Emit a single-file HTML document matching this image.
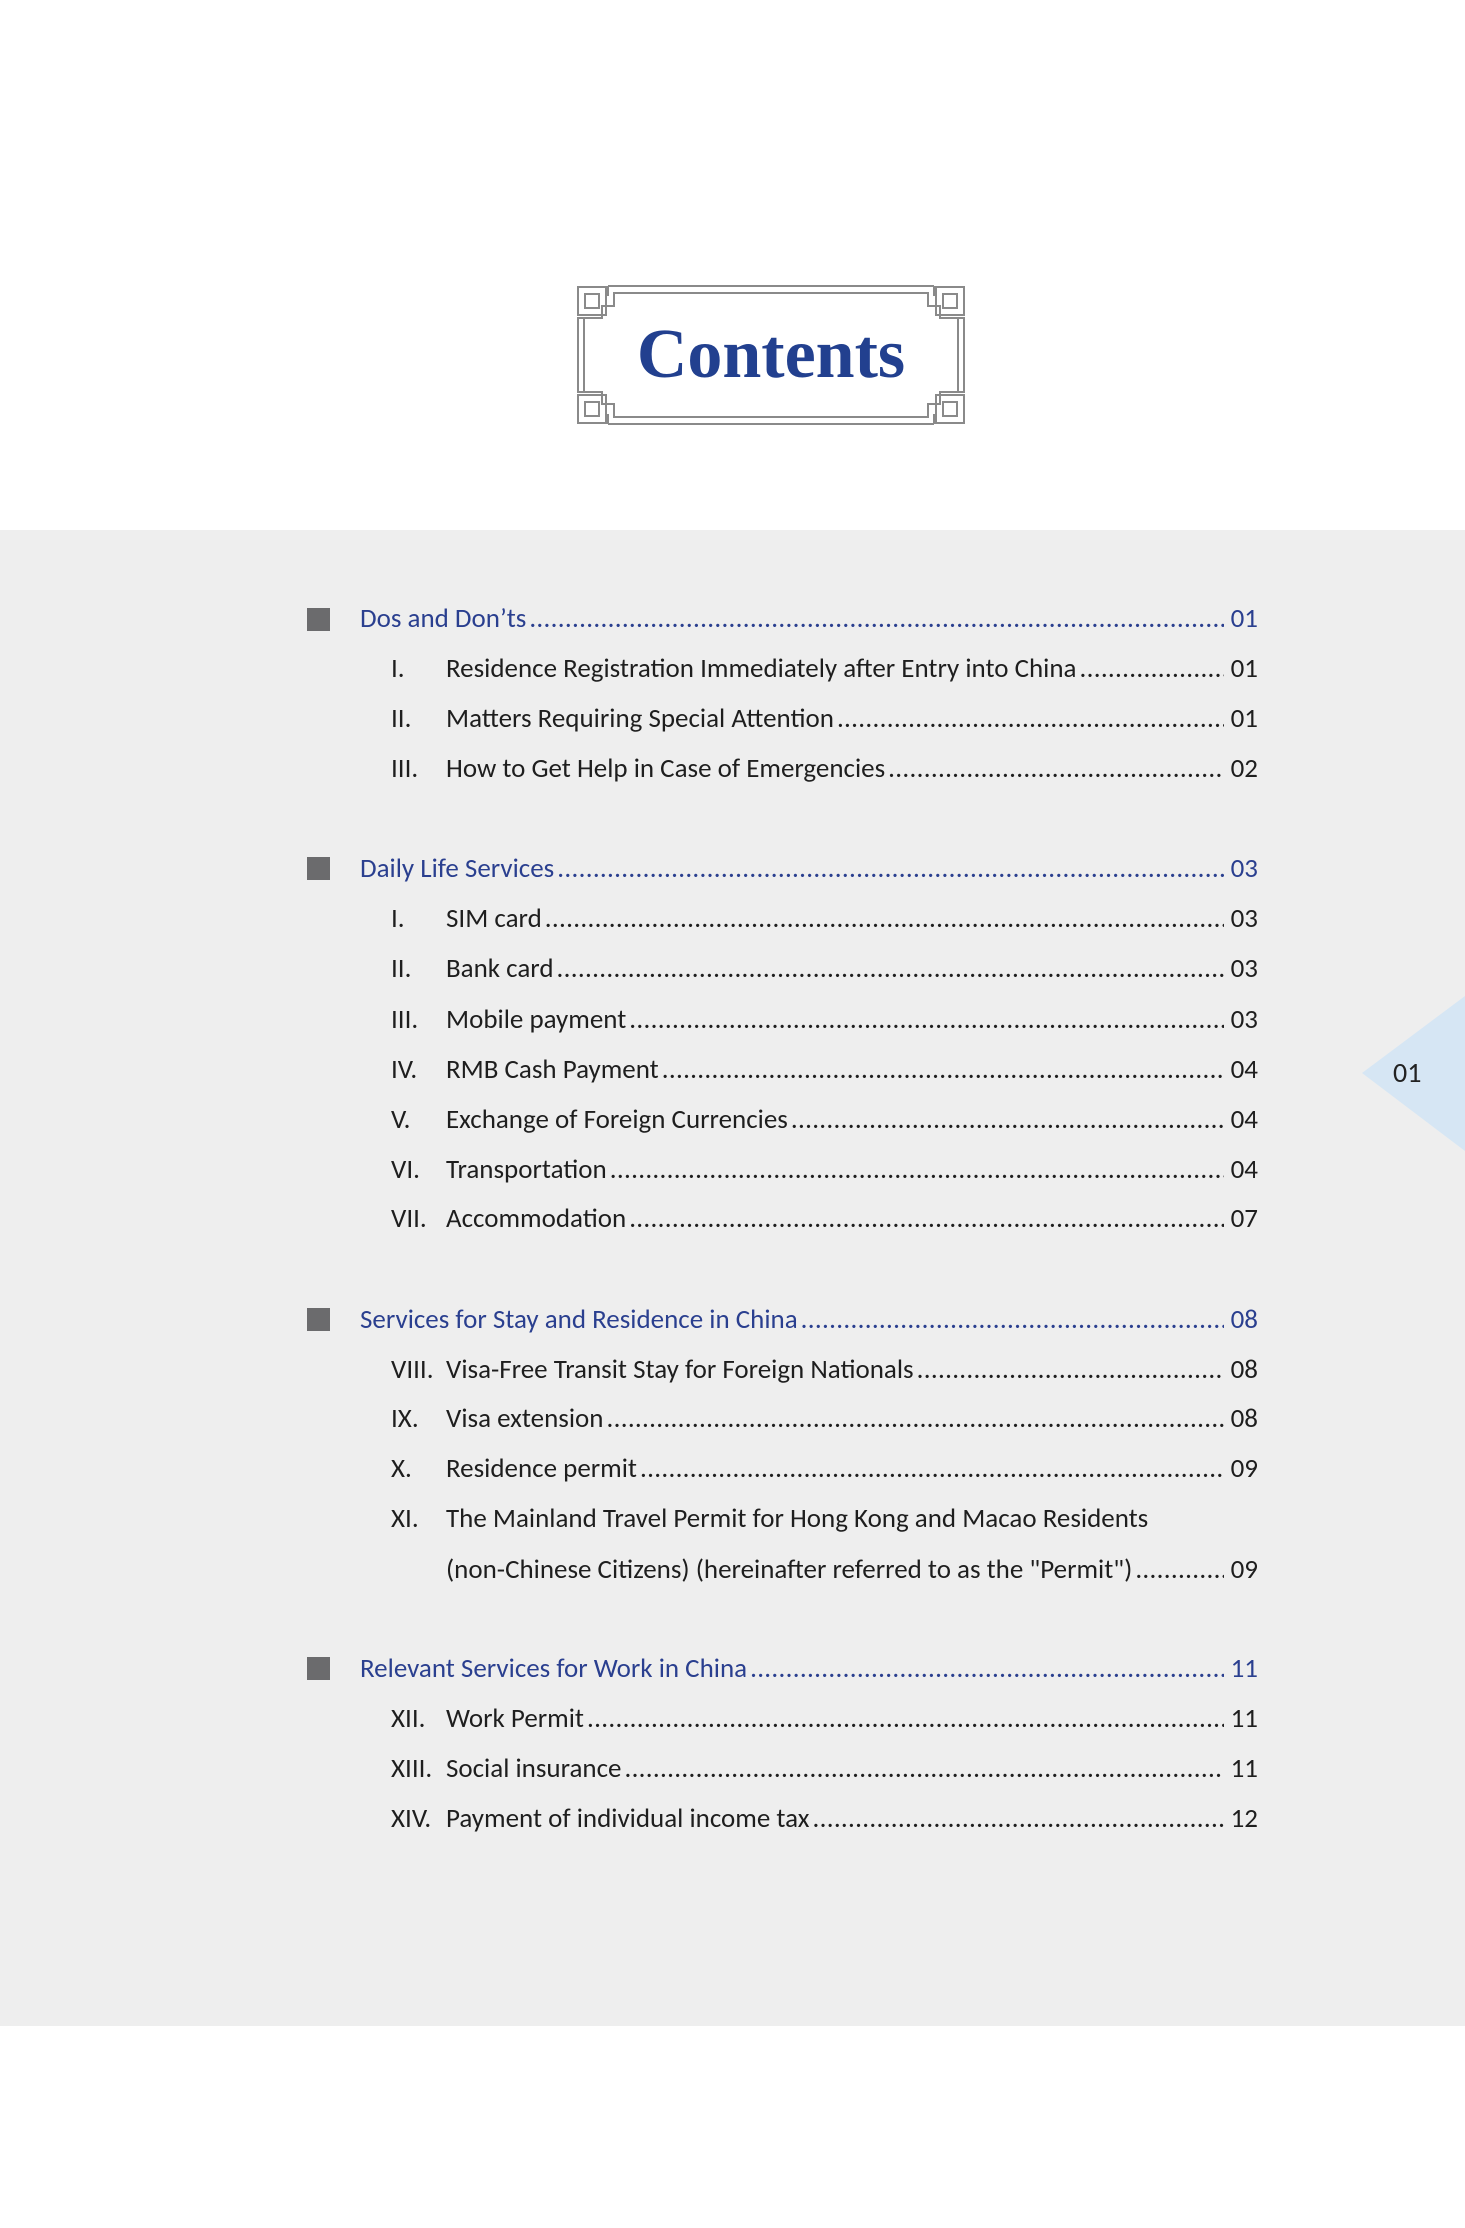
<!DOCTYPE html>
<html><head><meta charset="utf-8"><style>
html,body{margin:0;padding:0;background:#fff;}
body{width:1465px;height:2228px;position:relative;overflow:hidden;font-family:"Carlito","Liberation Sans",sans-serif;}
.band{position:absolute;left:0;top:530px;width:1465px;height:1496px;background:#eeeeee;}
.row{position:absolute;left:446px;width:812px;height:36px;line-height:36px;display:flex;font-size:27px;color:#1e1e1e;white-space:nowrap;}
.row .t{flex:none;}
.row .l{flex:1;overflow:hidden;margin:0 7px 0 3px;letter-spacing:0.3px;}
.row .n{flex:none;}
.row .r{position:absolute;left:-55px;}
.h{left:360px;width:898px;color:#2a3f8f;}
.sq{position:absolute;left:307px;width:23px;height:23px;background:#6b6b6d;}
.title{position:absolute;left:576px;top:285px;width:390px;height:140px;text-align:center;font-family:"Liberation Serif",serif;font-weight:bold;font-size:70px;line-height:140px;color:#22408f;}
</style></head><body>
<div class="band"></div>
<svg style="position:absolute;left:0;top:0" width="1465" height="2228" fill="none" stroke="#8a8a8a" stroke-width="2">
<path d="M608 286 H934 M608 286 V296 M934 286 V296 M586 318 H578 V392 H586 M956 318 H964 V392 H956 M608 424 H934 M608 424 V414 M934 424 V414"/>
<path d="M614 293 H928 V306 H940 V318 H958 V392 H940 V404 H928 V417 H614 V404 H602 V392 H584 V318 H602 V306 H614 Z"/>
<rect x="578" y="287" width="28" height="28"/><rect x="585" y="294" width="14" height="14"/>
<rect x="936" y="287" width="28" height="28"/><rect x="943" y="294" width="14" height="14"/>
<rect x="578" y="395" width="28" height="28"/><rect x="585" y="402" width="14" height="14"/>
<rect x="936" y="395" width="28" height="28"/><rect x="943" y="402" width="14" height="14"/>
</svg>
<div class="title">Contents</div>
<svg style="position:absolute;left:0;top:0" width="1465" height="2228"><polygon points="1362,1073 1465,996 1465,1151" fill="#d6e6f4"/></svg>
<div style="position:absolute;left:1393px;top:1058px;font-size:28px;line-height:30px;color:#222;">01</div>

<div class="sq" style="top:608px"></div>
<div class="row h" style="top:601px"><span class="t">Dos and Don’ts</span><span class="l">....................................................................................................................................................................</span><span class="n">01</span></div>
<div class="row" style="top:651px"><span class="r">I.</span><span class="t">Residence Registration Immediately after Entry into China</span><span class="l">....................................................................................................................................</span><span class="n">01</span></div>
<div class="row" style="top:701px"><span class="r">II.</span><span class="t">Matters Requiring Special Attention</span><span class="l">....................................................................................................................................</span><span class="n">01</span></div>
<div class="row" style="top:751px"><span class="r">III.</span><span class="t">How to Get Help in Case of Emergencies</span><span class="l">....................................................................................................................................</span><span class="n">02</span></div>

<div class="sq" style="top:857px"></div>
<div class="row h" style="top:851px"><span class="t">Daily Life Services</span><span class="l">....................................................................................................................................................................</span><span class="n">03</span></div>
<div class="row" style="top:901px"><span class="r">I.</span><span class="t">SIM card</span><span class="l">....................................................................................................................................</span><span class="n">03</span></div>
<div class="row" style="top:951px"><span class="r">II.</span><span class="t">Bank card</span><span class="l">....................................................................................................................................</span><span class="n">03</span></div>
<div class="row" style="top:1002px"><span class="r">III.</span><span class="t">Mobile payment</span><span class="l">....................................................................................................................................</span><span class="n">03</span></div>
<div class="row" style="top:1052px"><span class="r">IV.</span><span class="t">RMB Cash Payment</span><span class="l">....................................................................................................................................</span><span class="n">04</span></div>
<div class="row" style="top:1102px"><span class="r">V.</span><span class="t">Exchange of Foreign Currencies</span><span class="l">....................................................................................................................................</span><span class="n">04</span></div>
<div class="row" style="top:1152px"><span class="r">VI.</span><span class="t">Transportation</span><span class="l">....................................................................................................................................</span><span class="n">04</span></div>
<div class="row" style="top:1201px"><span class="r">VII.</span><span class="t">Accommodation</span><span class="l">....................................................................................................................................</span><span class="n">07</span></div>

<div class="sq" style="top:1308px"></div>
<div class="row h" style="top:1302px"><span class="t">Services for Stay and Residence in China</span><span class="l">....................................................................................................................................................................</span><span class="n">08</span></div>
<div class="row" style="top:1352px"><span class="r">VIII.</span><span class="t">Visa-Free Transit Stay for Foreign Nationals</span><span class="l">....................................................................................................................................</span><span class="n">08</span></div>
<div class="row" style="top:1401px"><span class="r">IX.</span><span class="t">Visa extension</span><span class="l">....................................................................................................................................</span><span class="n">08</span></div>
<div class="row" style="top:1451px"><span class="r">X.</span><span class="t">Residence permit</span><span class="l">....................................................................................................................................</span><span class="n">09</span></div>
<div class="row" style="top:1501px"><span class="r">XI.</span><span class="t">The Mainland Travel Permit for Hong Kong and Macao Residents</span></div>
<div class="row" style="top:1552px"><span class="t">(non-Chinese Citizens) (hereinafter referred to as the "Permit")</span><span class="l">....................................................................................................................................</span><span class="n">09</span></div>

<div class="sq" style="top:1657px"></div>
<div class="row h" style="top:1651px"><span class="t">Relevant Services for Work in China</span><span class="l">....................................................................................................................................................................</span><span class="n">11</span></div>
<div class="row" style="top:1701px"><span class="r">XII.</span><span class="t">Work Permit</span><span class="l">....................................................................................................................................</span><span class="n">11</span></div>
<div class="row" style="top:1751px"><span class="r">XIII.</span><span class="t">Social insurance</span><span class="l">....................................................................................................................................</span><span class="n">11</span></div>
<div class="row" style="top:1801px"><span class="r">XIV.</span><span class="t">Payment of individual income tax</span><span class="l">....................................................................................................................................</span><span class="n">12</span></div>
</body></html>
